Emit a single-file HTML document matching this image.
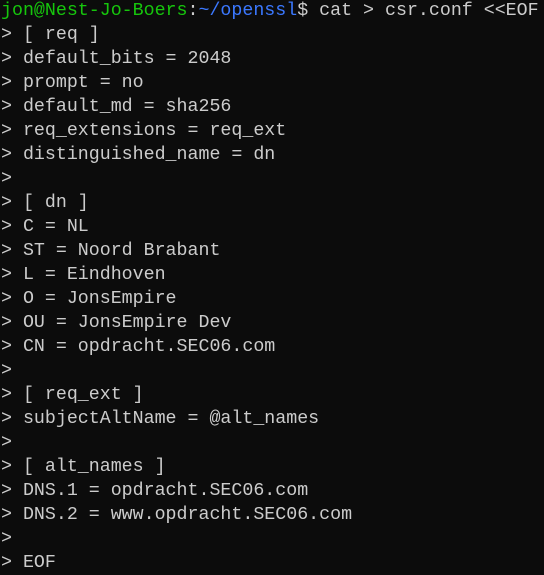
<!DOCTYPE html>
<html><head><meta charset="utf-8"><style>
html,body{margin:0;padding:0;background:#0c0c0c;width:544px;height:573px;overflow:hidden}
pre{margin:0;padding:0 0 0 1px;position:absolute;top:-1px;left:0;font-family:"Liberation Mono",monospace;font-size:18.3px;line-height:24px;color:#cccccc;white-space:pre}
.g{color:#16c60c}.b{color:#3b78ff}
</style></head><body><pre><span class="g">jon@Nest-Jo-Boers</span>:<span class="b">~/openssl</span>$ cat &gt; csr.conf &lt;&lt;EOF
&gt; [ req ]
&gt; default_bits = 2048
&gt; prompt = no
&gt; default_md = sha256
&gt; req_extensions = req_ext
&gt; distinguished_name = dn
&gt;
&gt; [ dn ]
&gt; C = NL
&gt; ST = Noord Brabant
&gt; L = Eindhoven
&gt; O = JonsEmpire
&gt; OU = JonsEmpire Dev
&gt; CN = opdracht.SEC06.com
&gt;
&gt; [ req_ext ]
&gt; subjectAltName = @alt_names
&gt;
&gt; [ alt_names ]
&gt; DNS.1 = opdracht.SEC06.com
&gt; DNS.2 = www.opdracht.SEC06.com
&gt;
&gt; EOF</pre></body></html>
